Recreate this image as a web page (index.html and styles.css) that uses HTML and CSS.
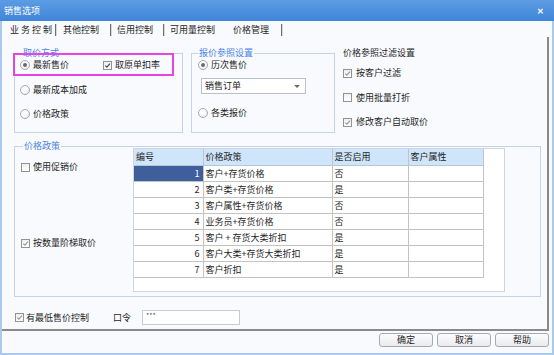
FILE: index.html
```html
<!DOCTYPE html>
<html lang="zh-CN">
<head>
<meta charset="utf-8">
<title>销售选项</title>
<link rel="stylesheet" href="styles.css">
</head>
<body>
<div class="window">
  <div class="titlebar">
    <span class="title">销售选项</span>
    <span class="close">✕</span>
  </div>
  <div class="client">
    <div class="tabs">
      <span class="tab tab-first">业务控制</span>
      <span class="sep sep1"></span>
      <span class="tab tab2">其他控制</span>
      <span class="sep sep2"></span>
      <span class="tab tab3">信用控制</span>
      <span class="sep sep3"></span>
      <span class="tab tab4">可用量控制</span>
      <span class="tab tab5">价格管理</span>
      <span class="sep sep5"></span>
    </div>
    <div class="panel">
      <div class="top-row">
        <div class="group-wrap">
          <fieldset class="group group-price">
            <legend>取价方式</legend>
            <div class="opts">
              <div class="opt-row">
                <span class="opt opt-wide"><span class="radio on"></span>最新售价</span>
                <span class="opt"><span class="check"><svg viewBox="0 0 7 7"><path d="M1.2 3.6 L2.9 5.2 L5.9 1.6" class="tick dark"/></svg></span>取原单扣率</span>
              </div>
              <span class="opt"><span class="radio"></span>最新成本加成</span>
              <span class="opt"><span class="radio"></span>价格政策</span>
            </div>
          </fieldset>
          <div class="highlight"></div>
        </div>
        <fieldset class="group group-ref">
          <legend>报价参照设置</legend>
          <span class="opt"><span class="radio on"></span>历次售价</span>
          <div class="select"><span>销售订单</span><span class="arrow"></span></div>
          <span class="opt opt-last"><span class="radio"></span>各类报价</span>
        </fieldset>
        <div class="filter">
          <div class="filter-title">价格参照过滤设置</div>
          <div class="opts filter-opts">
            <span class="opt"><span class="check"><svg viewBox="0 0 7 7"><path d="M1.2 3.6 L2.9 5.2 L5.9 1.6" class="tick"/></svg></span>按客户过滤</span>
            <span class="opt"><span class="check"></span>使用批量打折</span>
            <span class="opt"><span class="check"><svg viewBox="0 0 7 7"><path d="M1.2 3.6 L2.9 5.2 L5.9 1.6" class="tick"/></svg></span>修改客户自动取价</span>
          </div>
        </div>
      </div>

      <fieldset class="group group-policy">
        <legend>价格政策</legend>
        <div class="policy-body">
          <div class="policy-left">
            <span class="opt"><span class="check"></span>使用促销价</span>
            <span class="opt opt-tier"><span class="check"><svg viewBox="0 0 7 7"><path d="M1.2 3.6 L2.9 5.2 L5.9 1.6" class="tick"/></svg></span>按数量阶梯取价</span>
          </div>
          <div class="grid-box">
            <table class="grid">
              <colgroup>
                <col class="c1"><col class="c2"><col class="c3"><col class="c4">
              </colgroup>
              <thead>
                <tr><th>编号</th><th>价格政策</th><th>是否启用</th><th>客户属性</th></tr>
              </thead>
              <tbody>
                <tr><td class="num selected">1</td><td>客户+存货价格</td><td>否</td><td></td></tr>
                <tr><td class="num">2</td><td>客户类+存货价格</td><td>是</td><td></td></tr>
                <tr><td class="num">3</td><td>客户属性+存货价格</td><td>否</td><td></td></tr>
                <tr><td class="num">4</td><td>业务员+存货价格</td><td>否</td><td></td></tr>
                <tr><td class="num">5</td><td>客户 + 存货大类折扣</td><td>是</td><td></td></tr>
                <tr><td class="num">6</td><td>客户大类+存货大类折扣</td><td>是</td><td></td></tr>
                <tr><td class="num">7</td><td>客户折扣</td><td>是</td><td></td></tr>
              </tbody>
            </table>
          </div>
        </div>
      </fieldset>

      <div class="bottom-row">
        <span class="opt"><span class="check"><svg viewBox="0 0 7 7"><path d="M1.2 3.6 L2.9 5.2 L5.9 1.6" class="tick"/></svg></span>有最低售价控制</span>
        <span class="pwd-label">口令</span>
        <div class="pwd">***</div>
      </div>
    </div>
    <div class="buttons">
      <div class="btn">确定</div>
      <div class="btn">取消</div>
      <div class="btn">帮助</div>
    </div>
  </div>
</div>
</body>
</html>
```

FILE: styles.css
```css
* { box-sizing: border-box; }
html, body { margin: 0; padding: 0; }
body {
  width: 554px;
  height: 355px;
  overflow: hidden;
  font-family: "Noto Sans CJK SC", "Liberation Sans", sans-serif;
  font-size: 9px;
  line-height: 12px;
  color: #1e1e1e;
  background: #ffffff;
}
.window {
  width: 554px;
  height: 355px;
  display: flex;
  flex-direction: column;
}
.titlebar {
  height: 21px;
  flex: none;
  display: flex;
  align-items: center;
  justify-content: space-between;
  padding: 0 10px 0 4px;
  background: linear-gradient(#5c9ce3, #3f85d8);
  color: #ffffff;
}
.title { font-size: 9px; line-height: 12px; }
.close { font-size: 8px; font-weight: bold; line-height: 10px; }

.client {
  flex: 1;
  min-height: 0;
  display: flex;
  flex-direction: column;
  border: 2px solid #a9c9ef;
  border-top: 0;
  background: #f8fafd;
}

/* tabs */
.tabs {
  height: 16px;
  flex: none;
  display: flex;
  align-items: center;
  padding-left: 8px;
  padding-top: 1px;
}
.tab { white-space: nowrap; line-height: 12px; }
.tab-first { letter-spacing: 2px; }
.sep { width: 1px; height: 12px; background: #6d6d6d; box-shadow: 1px 0 0 #d8d8d8; }
.sep1 { margin-left: 1px; }
.tab2 { margin-left: 7px; }
.sep2 { margin-left: 11px; }
.tab3 { margin-left: 6px; }
.sep3 { margin-left: 10px; }
.tab4 { margin-left: 6px; }
.tab5 { margin-left: 18px; }
.sep5 { margin-left: 12px; }

/* main panel */
.panel {
  flex: 1;
  min-height: 0;
  margin-right: 3px;
  border-right: 2px solid #8a8a8a;
  border-bottom: 2px solid #8a8a8a;
  display: flex;
  flex-direction: column;
  padding: 10px 0 0 12px;
}
.top-row { display: flex; align-items: flex-start; }

.group {
  margin: 0;
  min-width: 0;
  border: 1px solid #c4d3e5;
  padding: 0 0 0 5px;
}
.group legend {
  padding: 0 1px;
  margin-left: 2px;
  font-size: 9px;
  line-height: 12px;
  color: #4a84e6;
}
.group-wrap { position: relative; width: 169px; height: 86px; flex: none; }
.group-price { width: 169px; height: 86px; }
.highlight {
  position: absolute;
  left: -1px;
  top: 6px;
  width: 161px;
  height: 23px;
  border: 2px solid #e843e6;
}
.group-ref {
  width: 144px;
  height: 86px;
  margin-left: 8px;
  padding-left: 6px;
  display: flex;
  flex-direction: column;
  align-items: flex-start;
}
.group-ref legend { margin-left: 0; }

.opts { display: flex; flex-direction: column; gap: 12.5px; align-items: flex-start; }
.opt-row { display: flex; }
.opt {
  display: flex;
  align-items: center;
  height: 12px;
  line-height: 12px;
  white-space: nowrap;
}
.opt-wide { width: 83px; }
.radio {
  width: 10px;
  height: 10px;
  flex: none;
  border-radius: 50%;
  border: 1px solid #a2aab3;
  background: radial-gradient(circle at 40% 35%, #ffffff 30%, #e2e4e8 100%);
  margin-right: 3px;
  display: flex;
  align-items: center;
  justify-content: center;
}
.radio.on::after {
  content: "";
  width: 4px;
  height: 4px;
  border-radius: 50%;
  background: #6a6a6a;
}
.check {
  width: 9px;
  height: 9px;
  flex: none;
  border: 1px solid #929292;
  background: linear-gradient(#efefef, #ffffff);
  margin-right: 3px;
  display: flex;
}
.check svg { width: 7px; height: 7px; display: block; }
.tick { fill: none; stroke: #9a9a9a; stroke-width: 1.2; }
.tick.dark { stroke: #4a4a4a; }

.select {
  width: 105px;
  height: 16px;
  margin: 7px 0 0 3px;
  border: 1px solid #b6c1cd;
  background: #ffffff;
  display: flex;
  align-items: center;
  justify-content: space-between;
  padding: 0 5px 0 3px;
}
.arrow {
  width: 0;
  height: 0;
  border-left: 3px solid transparent;
  border-right: 3px solid transparent;
  border-top: 3px solid #6a6a6a;
}
.opt-last { margin-top: 13px; }

.filter {
  margin-left: 7px;
  padding-left: 1px;
  display: flex;
  flex-direction: column;
}
.filter-title { height: 12px; line-height: 12px; }
.filter-opts { margin-top: 8px; }
.filter-opts .check { margin-right: 4px; }

/* policy group */
.group-policy {
  width: 527px;
  height: 157px;
  margin-top: 7px;
  padding-left: 6px;
}
.group-policy legend { margin-left: 2px; }
.policy-body { display: flex; align-items: flex-start; }
.policy-left {
  width: 112px;
  flex: none;
  display: flex;
  flex-direction: column;
  padding-top: 9px;
}
.opt-tier { margin-top: 64px; }
.grid-box {
  width: 372px;
  height: 144px;
  margin-top: -4px;
  border: 1px solid #cdd6e0;
  background: #ffffff;
}
.grid {
  border-collapse: collapse;
  table-layout: fixed;
  width: 349px;
  border-right: 1px solid #7c7c7c;
  border-bottom: 1px solid #7c7c7c;
}
.c1 { width: 69px; }
.c2 { width: 129px; }
.c3 { width: 76px; }
.c4 { width: 75px; }
.grid th, .grid td {
  height: 16px;
  padding: 0 2px;
  font-weight: normal;
  text-align: left;
  white-space: nowrap;
  overflow: hidden;
  line-height: 15px;
}
.grid th {
  background: #cfe5f9;
  border-right: 1px solid #b4c6d8;
  border-bottom: 1px solid #b4c6d8;
}
.grid td {
  border-right: 1px solid #c3c3c3;
  border-bottom: 1px solid #c3c3c3;
}
.grid td.num { text-align: right; padding-right: 3px; }
.grid td.selected { background: #3f5f9c; color: #ffffff; }

/* bottom row */
.bottom-row {
  display: flex;
  align-items: center;
  height: 15px;
  margin-top: 13px;
  padding-left: 1px;
}
.bottom-row .check { margin-right: 2px; }
.pwd-label { margin-left: 24px; }
.pwd {
  margin-left: 11px;
  width: 98px;
  height: 15px;
  border: 1px solid #c6ccd4;
  background: #ffffff;
  font-size: 7px;
  line-height: 8px;
  color: #555555;
  padding: 0 3px;
}

/* buttons */
.buttons {
  height: 22px;
  flex: none;
  display: flex;
  justify-content: flex-end;
  gap: 4px;
  padding: 2px 3px 0 0;
}
.btn {
  width: 54px;
  height: 14px;
  border: 1px solid #a3aab3;
  border-radius: 3px;
  background: linear-gradient(#fdfdfd, #e8eaee);
  display: flex;
  align-items: center;
  justify-content: center;
  line-height: 12px;
}
```
